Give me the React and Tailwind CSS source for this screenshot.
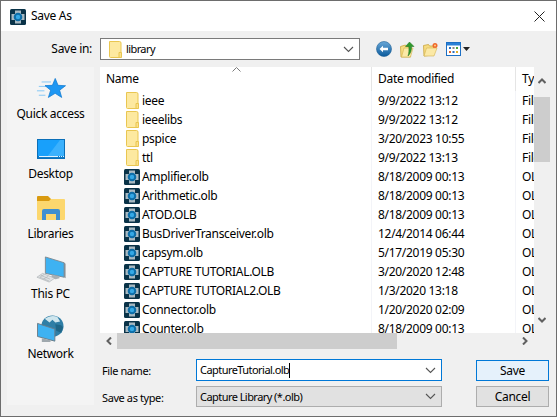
import React from "react";

const font = { fontFamily: '"Noto Sans", "Open Sans", sans-serif' };

function AppIcon() {
  return (
    <svg width="16" height="16" viewBox="0 0 16 16" className="shrink-0">
      <rect x="0" y="0" width="16" height="16" rx="1.500" fill="#0a3348" />
      <path d="M5 1.500h6v3.500h3.500v6H11v3.500H5V11H1.500V5H5z" fill="#a9b9c1" />
      <circle cx="8" cy="8" r="4.300" fill="#0d6ea8" />
      <circle cx="8" cy="8" r="2.200" fill="#35a9e6" />
    </svg>
  );
}

function FolderPage() {
  return (
    <svg width="13" height="17" viewBox="0 0 13 17" className="shrink-0">
      <path d="M.5.5h10a1.500 1.500 0 0 1 1.500 1.500v14.500H1.500a1 1 0 0 1-1-1z" fill="#fde9a0" stroke="#e9c651" />
      <path d="M10 11.500h2.500v5H10z" fill="#fbe08a" stroke="#e9c651" />
    </svg>
  );
}

function Chevron({ className = "" }) {
  return (
    <svg width="11" height="7" viewBox="0 0 11 7" className={className}>
      <path d="M1 1l4.500 4.500L10 1" fill="none" stroke="#555" strokeWidth="1.100" />
    </svg>
  );
}

function Arrow({ d }) {
  return (
    <svg width="8" height="8" viewBox="0 0 8 8">
      <path d={d} fill="none" stroke="#606060" strokeWidth="2" />
    </svg>
  );
}

function StarIcon() {
  return (
    <svg width="30" height="23" viewBox="0 0 32 26" preserveAspectRatio="none">
      <g stroke="#7cc4f5" strokeWidth="1">
        <path d="M6 4.500h10M3 9.500h9M1 14.500h8M3 19.500h7" />
      </g>
      <path d="M20.500 .5l3 7.800 8 .4-6.300 5.100 2.200 8.200-7-4.700-7.200 4.700 2.400-8.200-6-5.200 7.900-.3z" fill="#1e97f3" stroke="#0f78cf" strokeWidth=".8" />
    </svg>
  );
}

function DesktopIcon() {
  return (
    <svg width="28" height="20" viewBox="0 0 28 20">
      <rect x=".5" y=".5" width="27" height="19" fill="#18a0fb" stroke="#0b6fb8" />
      <path d="M10 18L23 1h4v17z" fill="#3bb1fd" />
      <rect x="1" y="17" width="26" height="2" fill="#0d7bc9" />
      <path d="M2 17.500h19M22 17.500h1M24 17.500h1M26 17.500h1" stroke="#dff2ff" strokeWidth="1" />
    </svg>
  );
}

function LibrariesIcon() {
  return (
    <svg width="28" height="24" viewBox="0 0 28 24">
      <path d="M0 1a1 1 0 0 1 1-1h10l3 3v2H0z" fill="#d99a10" />
      <path d="M0 5h12l2-2h13a1 1 0 0 1 1 1v19a1 1 0 0 1-1 1H1a1 1 0 0 1-1-1z" fill="#fcd76e" />
      <path d="M5 24v-9a2 2 0 0 1 2-2h14a2 2 0 0 1 2 2v9h-4v-6H9v6z" fill="#3f8fd0" />
    </svg>
  );
}

function PcIcon() {
  return (
    <svg width="30" height="27" viewBox="0 0 32 28" preserveAspectRatio="none">
      <path d="M10 1l20 6v15l-20-4z" fill="#3eb2f2" stroke="#7c8a92" strokeWidth="1" />
      <path d="M30 7l1.500 1v15L30 22z" fill="#7f8a90" />
      <path d="M17 19.500l8 1.500v2l-4 1-5-1z" fill="#a8b0b4" />
      <path d="M7 18l13 5-6 4L1 22z" fill="#dfe2e4" stroke="#a3a9ad" strokeWidth=".6" />
      <path d="M5 20l10 4M4 22l10 4M9 19l-5 3M13 21l-5 3" stroke="#a8aeb2" strokeWidth=".6" />
    </svg>
  );
}

function NetworkIcon() {
  return (
    <svg width="27" height="28" viewBox="0 0 28 30" preserveAspectRatio="none">
      <circle cx="16" cy="12" r="11.500" fill="#2f7ea6" />
      <path d="M8 4c4-3 9-4 13-2l3 5-5 1-3-3-3 3z" fill="#cfe6ee" />
      <path d="M19 10l6 1 2 2-2 6-5-2z" fill="#1f6688" />
      <path d="M.5 9l18 6v13L.5 23z" fill="#3eb2f2" stroke="#6c7c86" strokeWidth="1" />
      <path d="M5 25l9 2v2H5z" fill="#9fa8ad" />
    </svg>
  );
}

function BackIcon() {
  return (
    <svg width="16" height="16" viewBox="0 0 16 16">
      <defs>
        <linearGradient id="bk" x1="0" y1="0" x2="0" y2="1">
          <stop offset="0" stopColor="#6aa8d8" />
          <stop offset="1" stopColor="#0a5a9c" />
        </linearGradient>
      </defs>
      <circle cx="8" cy="8" r="7.500" fill="url(#bk)" stroke="#1c5f96" strokeWidth=".6" />
      <path d="M3.500 8l3.500-3.300v2h5v2.600H7v2z" fill="#fff" />
    </svg>
  );
}

function UpIcon() {
  return (
    <svg width="15" height="17" viewBox="0 0 15 17">
      <path d="M.5 5.500l5-1.500 1 1.500h4v10.500H1z" fill="#f6dc82" stroke="#c9a53e" strokeWidth=".8" />
      <path d="M4 7l9 0-2.500 9H1.500z" fill="#fbe9a6" stroke="#d4b24e" strokeWidth=".6" />
      <path d="M9.500 1l4.500 4.500h-2.500c.2 3.800-.8 7-3.500 9.500 1-3 1.100-6 .8-9.500H5.500z" fill="#2f9a2c" stroke="#1e6e1c" strokeWidth=".5" />
    </svg>
  );
}

function NewFolderIcon() {
  return (
    <svg width="16" height="15" viewBox="0 0 16 15">
      <path d="M.5 3.500l5-1 1 1.500h4v9L1 14z" fill="#f6dc82" stroke="#c9a53e" strokeWidth=".8" />
      <path d="M3.500 6H14l-3 8H1z" fill="#fbe9a6" stroke="#d4b24e" strokeWidth=".6" />
      <circle cx="12" cy="3.500" r="2.500" fill="#f0682a" />
      <circle cx="12" cy="3.500" r="1" fill="#fbd08a" />
    </svg>
  );
}

function ViewsIcon() {
  return (
    <svg width="15" height="14" viewBox="0 0 15 14">
      <rect x=".5" y=".5" width="14" height="13" fill="#fff" stroke="#1c6fc4" />
      <rect x="1" y="1" width="13" height="2.500" fill="#2a80d6" />
      <rect x="3" y="5" width="2" height="2" fill="#2a6fc0" />
      <rect x="6.500" y="5" width="2" height="2" fill="#8a8a8a" />
      <rect x="10" y="5" width="2" height="2" fill="#4aa53a" />
      <rect x="3" y="9" width="2" height="2" fill="#e0642a" />
      <rect x="6.500" y="9" width="2" height="2" fill="#2a6fc0" />
      <rect x="10" y="9" width="2" height="2" fill="#e0b02a" />
    </svg>
  );
}

const places = [
  { name: "Quick access", icon: <StarIcon />, gap: "h-[2px]" },
  { name: "Desktop", icon: <DesktopIcon />, gap: "h-[4px]" },
  { name: "Libraries", icon: <LibrariesIcon />, gap: "h-[3px]" },
  { name: "This PC", icon: <PcIcon />, gap: "h-0" },
  { name: "Network", icon: <NetworkIcon />, gap: "h-0" },
];

const rows = [
  ["ieee", "9/9/2022 13:12", "File folder", true],
  ["ieeelibs", "9/9/2022 13:12", "File folder", true],
  ["pspice", "3/20/2023 10:55", "File folder", true],
  ["ttl", "9/9/2022 13:13", "File folder", true],
  ["Amplifier.olb", "8/18/2009 00:13", "OLB File", false],
  ["Arithmetic.olb", "8/18/2009 00:13", "OLB File", false],
  ["ATOD.OLB", "8/18/2009 00:13", "OLB File", false],
  ["BusDriverTransceiver.olb", "12/4/2014 06:44", "OLB File", false],
  ["capsym.olb", "5/17/2019 05:30", "OLB File", false],
  ["CAPTURE TUTORIAL.OLB", "3/20/2020 12:48", "OLB File", false],
  ["CAPTURE TUTORIAL2.OLB", "1/3/2020 13:18", "OLB File", false],
  ["Connector.olb", "1/20/2020 02:09", "OLB File", false],
  ["Counter.olb", "8/18/2009 00:13", "OLB File", false],
];

export default function App() {
  return (
    <div style={font} className="w-[557px] h-[417px] border border-[#6d6d6d] bg-[#f0f0f0] flex flex-col text-[12px] leading-[16px] text-black overflow-hidden tracking-[-0.3px]">
      <div className="h-[30px] bg-white flex items-center shrink-0">
        <div className="ml-[9px] mt-[1px]"><AppIcon /></div>
        <span className="ml-[5px] text-[12px]">Save As</span>
        <svg width="11" height="11" viewBox="0 0 11 11" className="ml-auto mr-[11px]">
          <path d="M.5.5l10 10M10.500.5l-10 10" stroke="#222" strokeWidth="1" fill="none" />
        </svg>
      </div>

      <div className="flex items-center h-[22px] mt-[7px] shrink-0">
        <span className="w-[91px] text-right">Save in:</span>
        <div className="ml-[8px] w-[260px] h-[22px] border border-[#7a7a7a] bg-white flex items-center pl-[8px] pr-[5px]">
          <FolderPage />
          <span className="ml-[4px] text-[11px] tracking-[-0.6px]">library</span>
          <Chevron className="ml-auto" />
        </div>
        <div className="ml-[16px]"><BackIcon /></div>
        <div className="ml-[8px]"><UpIcon /></div>
        <div className="ml-[8px]"><NewFolderIcon /></div>
        <div className="ml-[7px] flex items-center">
          <ViewsIcon />
          <svg width="7" height="4" viewBox="0 0 7 4" className="ml-[2px]"><path d="M0 0h7L3.500 4z" fill="#222" /></svg>
        </div>
      </div>

      <div className="flex mt-[7px] flex-1 min-h-0">
        <div className="ml-[6px] w-[87px] h-[338px] bg-[#f4f4f4] flex flex-col items-center shrink-0 pt-[1px]">
          {places.map(({ name, icon, gap }) => (
            <div key={name} className="h-[60px] w-full flex flex-col items-center shrink-0">
              <div className="h-[35px] flex flex-col items-center justify-end">
                {icon}
                <div className={gap} />
              </div>
              <span className="mt-[3px] whitespace-nowrap">{name}</span>
            </div>
          ))}
        </div>

        <div className="ml-[6px] w-[450px] flex flex-col">
          <div className="flex h-[266px] shrink-0">
            <div className="relative w-[434px] bg-white overflow-hidden">
              <svg width="9" height="5" viewBox="0 0 9 5" className="absolute left-[132px] top-[0px]">
                <path d="M.5 4.500l4-4 4 4" fill="none" stroke="#7a7a7a" />
              </svg>
              <div className="grid grid-cols-[272px_144px_18px] h-[24px] items-center">
                <div className="pl-[6px] h-full flex items-center border-r border-[#e5e5e5]">Name</div>
                <div className="pl-[6px] h-full flex items-center border-r border-[#e5e5e5]">Date modified</div>
                <div className="pl-[6px] h-full flex items-center whitespace-nowrap overflow-hidden">Type</div>
              </div>
              {rows.map(([name, date, type, isFolder]) => (
                <div key={name} className="grid grid-cols-[272px_144px_18px] h-[19px]">
                  <div className="flex items-center border-r border-[#f3f4f8]">
                    {isFolder ? (
                      <span className="ml-[26px] w-[13px] mr-[3px] flex"><FolderPage /></span>
                    ) : (
                      <span className="ml-[24px] w-[16px] mr-[2px] flex"><AppIcon /></span>
                    )}
                    <span className="whitespace-nowrap">{name}</span>
                  </div>
                  <div className="pl-[6px] flex items-center border-r border-[#f3f4f8] whitespace-nowrap">{date}</div>
                  <div className="pl-[6px] flex items-center whitespace-nowrap overflow-hidden">{type}</div>
                </div>
              ))}
            </div>
            <div className="w-[16px] flex flex-col items-center">
              <div className="h-[33px] flex items-center justify-center -mt-[3px]"><Arrow d="M.5 6l3.500-3.500L7.500 6" /></div>
              <div className="w-full h-[65px] bg-[#cdcdcd]" />
              <div className="mt-auto h-[17px] flex items-start justify-center"><Arrow d="M.5 2l3.500 3.500L7.500 2" /></div>
            </div>
          </div>

          <div className="h-[16px] flex items-center shrink-0">
            <div className="w-[17px] flex justify-center"><Arrow d="M6 .5L2.500 4 6 7.500" /></div>
            <div className="w-[280px] h-full bg-[#cdcdcd]" />
            <div className="ml-auto w-[34px] flex justify-center pr-[17px] box-border"><Arrow d="M2 .5L5.500 4 2 7.500" /></div>
          </div>

          <div className="flex mt-[10px]">
            <div className="w-[96px] pl-[2px] pt-[4px] flex flex-col gap-[11px] text-[11px] tracking-[-0.4px]">
              <span>File name:</span>
              <span>Save as type:</span>
            </div>
            <div className="w-[246px] flex flex-col gap-[5px] text-[11px] tracking-[-0.55px]">
              <div className="h-[22px] border border-[#0078d7] bg-white flex items-center pl-[3px] pr-[5px]">
                <span>CaptureTutorial.olb</span>
                <span className="w-[1px] h-[15px] bg-black" />
                <Chevron className="ml-auto" />
              </div>
              <div className="h-[21px] border border-[#adadad] bg-[#e1e1e1] flex items-center pl-[3px] pr-[5px]">
                <span>Capture Library (*.olb)</span>
                <Chevron className="ml-auto" />
              </div>
            </div>
            <div className="ml-[34px] mt-[1px] w-[73px] flex flex-col gap-[5px]">
              <div className="h-[21px] border-[1.500px] border-[#0078d7] bg-[#e5f1fb] flex items-center justify-center">Save</div>
              <div className="h-[21px] border border-[#adadad] bg-[#e1e1e1] flex items-center justify-center">Cancel</div>
            </div>
          </div>
        </div>
      </div>
    </div>
  );
}
